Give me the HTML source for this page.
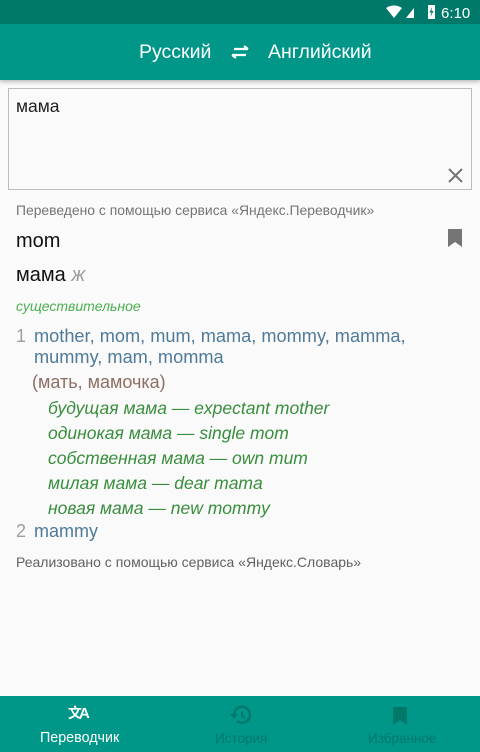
<!DOCTYPE html>
<html><head><meta charset="utf-8"><style>
*{margin:0;padding:0;box-sizing:border-box}
body{width:480px;height:752px;position:relative;background:#fafafa;font-family:"Liberation Sans","Noto Sans CJK SC",sans-serif;overflow:hidden}
.a{position:absolute;white-space:nowrap}
</style></head><body>
<div class="a" style="left:0;top:0;width:480px;height:24px;background:#00796b"></div>
<svg class="a" style="left:384px;top:4px" width="90" height="16" viewBox="0 0 90 16">
<path d="M2 4 Q10 -1 18 4 L10 14 Z" fill="#fff"/>
<path d="M22 14 L30 4 L30 14 Z" fill="#fff"/>
<rect x="44" y="1" width="7" height="14" fill="#fff"/><path d="M48 3 L45.5 8.5 H47.5 L46.5 13 L49.5 7 H47.5Z" fill="#00796b"/>
<text x="57" y="14" fill="#fff" font-size="15" font-family="Liberation Sans">6:10</text></svg>
<div class="a" style="left:0;top:24px;width:480px;height:56px;background:#009688;box-shadow:0 2px 4px rgba(0,0,0,.25)"></div>
<div class="a" style="left:139px;top:41px;color:#fff;font-size:19.5px">Русский</div>
<svg class="a" style="left:230px;top:44px" width="20" height="16" viewBox="0 0 20 16"><path d="M4 5H18M14 2L18 5M16 11H2M6 14L2 11" stroke="#fff" stroke-width="2.2" fill="none"/></svg>
<div class="a" style="left:268px;top:41px;color:#fff;font-size:19.5px">Английский</div>
<div class="a" style="left:8px;top:88px;width:464px;height:102px;border:1px solid #bdbdbd"></div>
<div class="a" style="left:16px;top:96px;font-size:17.5px;color:#212121">мама</div>
<svg class="a" style="left:448px;top:168px" width="15" height="15" viewBox="0 0 15 15"><path d="M1 1L14 14M14 1L1 14" stroke="#757575" stroke-width="2"/></svg>
<div class="a" style="left:16px;top:202px;font-size:13.9px;color:#757575">Переведено с помощью сервиса «Яндекс.Переводчик»</div>
<div class="a" style="left:16px;top:230px;font-size:20px;color:#111">mom</div>
<svg class="a" style="left:447px;top:229px" width="16" height="18" viewBox="0 0 16 18"><path d="M1 0H15V18L8 13L1 18Z" fill="#757575"/></svg>
<div class="a" style="left:16px;top:264px;font-size:20px;color:#111">мама <i style="color:#9e9e9e">ж</i></div>
<div class="a" style="left:16px;top:298px;font-size:14px;color:#4caf50;font-style:italic">существительное</div>
<div class="a" style="left:16px;top:326px;font-size:18px;color:#9e9e9e">1</div>
<div class="a" style="left:34px;top:326px;font-size:18.2px;color:#4f7a99;line-height:21px">mother, mom, mum, mama, mommy, mamma,<br>mummy, mam, momma</div>
<div class="a" style="left:32px;top:372px;font-size:18px;color:#8d6e63">(мать, мамочка)</div>
<div class="a" style="left:48px;top:396px;font-size:17.5px;color:#388e3c;font-style:italic;line-height:25px">будущая мама — expectant mother<br>одинокая мама — single mom<br>собственная мама — own mum<br>милая мама — dear mama<br>новая мама — new mommy</div>
<div class="a" style="left:16px;top:521px;font-size:18px;color:#9e9e9e">2</div>
<div class="a" style="left:34px;top:521px;font-size:18px;color:#4f7a99">mammy</div>
<div class="a" style="left:16px;top:554px;font-size:14px;color:#616161">Реализовано с помощью сервиса «Яндекс.Словарь»</div>
<div class="a" style="left:0;top:696px;width:480px;height:56px;background:#009688"></div>
<div class="a" style="left:68px;top:703px;color:#fff;font-size:14px;font-weight:bold">文<span style="font-size:15px;margin-left:-3px">A</span></div>
<div class="a" style="left:40px;top:730px;color:#fff;font-size:14.3px">Переводчик</div>
<svg class="a" style="left:229px;top:705px" width="22" height="20" viewBox="0 0 22 20"><path d="M5 10A8 8 0 1 1 8 16" stroke="#00796b" stroke-width="2.4" fill="none"/><path d="M1 9H9L5 14Z" fill="#00796b"/><path d="M13 6V11L16 13" stroke="#00796b" stroke-width="2" fill="none"/></svg>
<div class="a" style="left:215px;top:731px;color:#00796b;font-size:13.5px">История</div>
<svg class="a" style="left:393px;top:707px" width="14" height="18" viewBox="0 0 14 18"><path d="M0 0H14V18L7 13L0 18Z" fill="#00796b"/></svg>
<div class="a" style="left:368px;top:731px;color:#00796b;font-size:13.5px">Избранное</div>
</body></html>
